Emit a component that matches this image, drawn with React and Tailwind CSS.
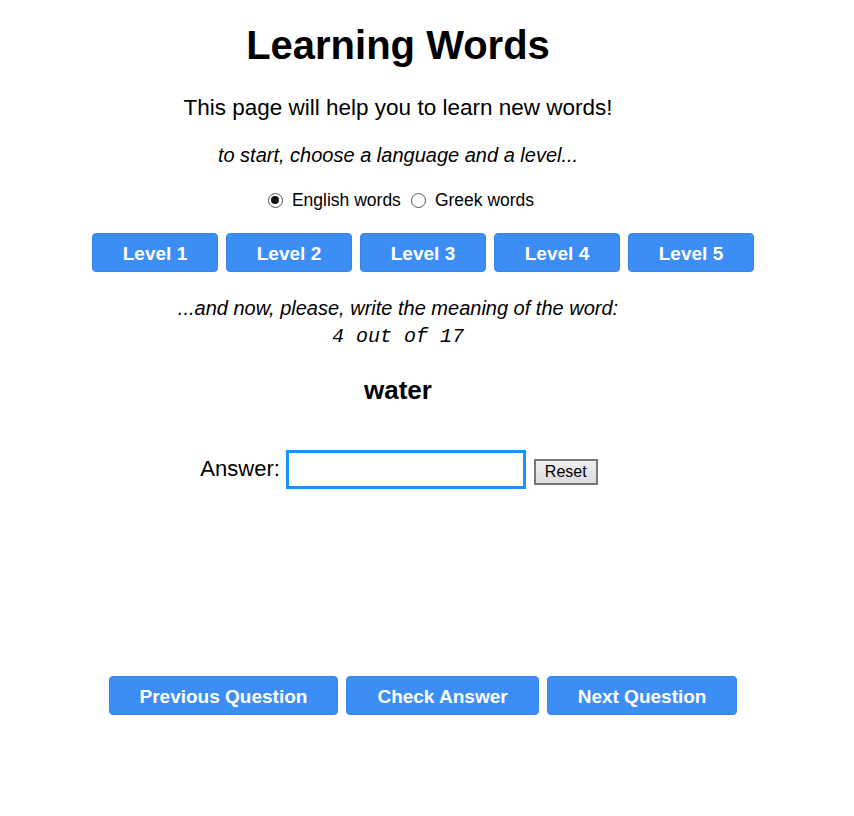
import React, { useState } from "react";

const levels = [1, 2, 3, 4, 5];

function Radio({ checked, label, onClick, className = "" }) {
  return (
    <label className={"flex items-center cursor-pointer " + className} onClick={onClick}>
      <span className="w-[15px] h-[15px] rounded-full border border-[#555] bg-white flex items-center justify-center mr-[9px]">
        {checked && <span className="w-[8px] h-[8px] rounded-full bg-[#111]" />}
      </span>
      <span>{label}</span>
    </label>
  );
}

function BlueButton({ children, className = "" }) {
  return (
    <button
      className={
        "h-[39px] pt-[2px] rounded-[4px] bg-[#3d8ef4] border border-[#3784e8] text-white font-bold text-[19px] leading-[21px] hover:bg-[#2f7fe6] " +
        className
      }
    >
      {children}
    </button>
  );
}

export default function App() {
  const [lang, setLang] = useState("en");
  const [answer, setAnswer] = useState("");

  return (
    <div className="w-full min-h-screen bg-white text-black font-['Liberation_Sans',Arial,sans-serif]">
      <div className="w-[796px] flex flex-col items-center text-center">
        <h1 className="mt-[22px] text-[40px] leading-[46px] font-bold">
          Learning Words
        </h1>
        <p className="mt-[27px] text-[22.5px] leading-[26px]">
          This page will help you to learn new words!
        </p>
        <p className="mt-[22px] text-[20px] leading-[24px] italic">
          to start, choose a language and a level...
        </p>
        <div className="mt-[23px] flex items-center text-[17.5px] leading-[20px] pl-[6px]">
          <Radio checked={lang === "en"} label="English words" onClick={() => setLang("en")} />
          <Radio
            checked={lang === "gr"}
            label="Greek words"
            onClick={() => setLang("gr")}
            className="ml-[10px]"
          />
        </div>
      </div>

      <div className="mt-[23px] flex justify-center gap-[8px] pr-[8px]">
        {levels.map((n) => (
          <BlueButton key={n} className="w-[126px]">
            Level {n}
          </BlueButton>
        ))}
      </div>

      <div className="w-[796px] flex flex-col items-center text-center">
        <p className="mt-[24px] text-[20px] leading-[24px] italic">
          ...and now, please, write the meaning of the word:
        </p>
        <p className="mt-[5px] text-[20px] leading-[23px] italic font-['Liberation_Mono','Courier_New',monospace]">
          4 out of 17
        </p>
        <h2 className="mt-[27px] text-[26px] leading-[30px] font-bold">water</h2>

        <div className="mt-[45px] flex items-end pl-[2px]">
          <span className="text-[22px] leading-[26px] mb-[7px] mr-[6px]">Answer:</span>
          <input
            value={answer}
            onChange={(e) => setAnswer(e.target.value)}
            className="w-[240px] h-[39px] border-[3px] border-[#1e90ff] outline-none px-2 text-[18px]"
          />
          <button
            onClick={() => setAnswer("")}
            className="ml-[8px] mb-[4px] px-[9px] py-[2px] text-[16px] leading-[18px] border-2 border-[#767676] bg-gradient-to-b from-[#f0f0f0] to-[#dcdcdc]"
          >
            Reset
          </button>
        </div>
      </div>

      <div className="mt-[187px] flex justify-center gap-[8px] pr-[8px]">
        <BlueButton className="px-[30px]">Previous Question</BlueButton>
        <BlueButton className="px-[30px]">Check Answer</BlueButton>
        <BlueButton className="px-[30px]">Next Question</BlueButton>
      </div>
    </div>
  );
}
